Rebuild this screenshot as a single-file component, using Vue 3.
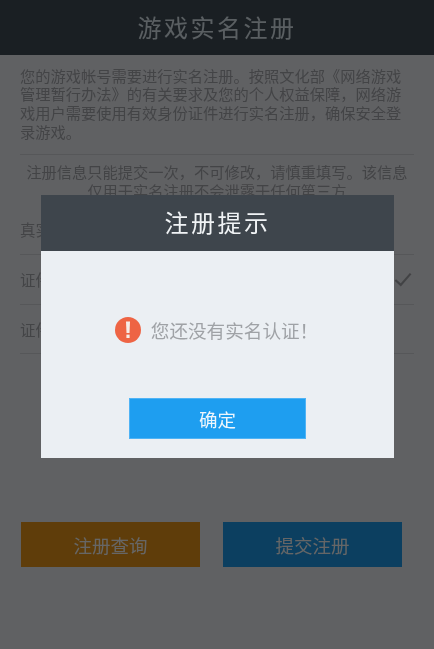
<script setup>
const rows = [
  { label: '真实姓名', check: false, short: false },
  { label: '证件类型', check: true, short: false },
  { label: '证件号码', check: false, short: true }
]
</script>

<template>
  <div class="page">
    <header class="top">游戏实名注册</header>
    <p class="intro">您的游戏帐号需要进行实名注册。按照文化部《网络游戏管理暂行办法》的有关要求及您的个人权益保障，网络游戏用户需要使用有效身份证件进行实名注册，确保安全登录游戏。</p>
    <div class="form">
      <p class="notice">注册信息只能提交一次，不可修改，请慎重填写。该信息仅用于实名注册不会泄露于任何第三方</p>
      <div v-for="row in rows" :key="row.label" class="row" :class="{ short: row.short }">
        <span>{{ row.label }}</span>
        <svg v-if="row.check" class="check" viewBox="0 0 20 16" width="18" height="15">
          <path d="M1.5 8.5 L7.5 14 L18.5 1.5" fill="none" stroke="#a6a8ac" stroke-width="2.4" />
        </svg>
      </div>
    </div>
    <div class="actions">
      <button class="btn query">注册查询</button>
      <button class="btn submit">提交注册</button>
    </div>

    <div class="overlay">
      <div class="modal">
        <div class="modal-title">注册提示</div>
        <div class="modal-msg">
          <svg class="warn" viewBox="0 0 26 26" width="26" height="26">
            <circle cx="13" cy="13" r="13" fill="#ee6444" />
            <path d="M11 4.5 h4 l-.5 11.5 h-3 z" fill="#f6ece8" />
            <rect x="11.4" y="17.6" width="3.2" height="3.4" fill="#f6ece8" />
          </svg>
          <span>您还没有实名认证！</span>
        </div>
        <button class="ok">确定</button>
      </div>
    </div>
  </div>
</template>

<style scoped>
.page {
  position: relative;
  width: 434px;
  height: 649px;
  overflow: hidden;
  background: #f0f2f7;
  color: #a8aab0;
  font-family: "Noto Sans CJK SC", "Noto Sans", sans-serif;
  font-size: 15.25px;
  line-height: 18.7px;
  filter: blur(0.4px);
}
.top {
  height: 55px;
  background: #414e58;
  color: #e2eef5;
  font-size: 24px;
  line-height: 54px;
  letter-spacing: 2.5px;
  text-align: center;
}
.intro {
  height: 100px;
  margin: 0 20px;
  padding-top: 10.5px;
  box-sizing: border-box;
  border-bottom: 1px solid #d8dade;
}
.form {
  padding: 0 20px;
}
.notice {
  margin: 0;
  padding-top: 7px;
  height: 50px;
  box-sizing: border-box;
  text-align: center;
  overflow: hidden;
}
.row {
  display: flex;
  align-items: center;
  justify-content: space-between;
  height: 50px;
  box-sizing: border-box;
  border-bottom: 1px solid #d8dade;
  font-size: 15.5px;
}
.row.short {
  height: 49px;
}
.check {
  margin-right: 2px;
}
.actions {
  display: flex;
  gap: 23px;
  margin: 168px 0 0 21px;
}
.btn {
  width: 179px;
  height: 45px;
  padding: 0;
  border: none;
  color: #fff;
  font-family: inherit;
  font-size: 18.5px;
}
.query {
  background: #ee9919;
}
.submit {
  background: #1e9ef0;
}
.overlay {
  position: absolute;
  inset: 0;
  background: rgba(0, 0, 0, 0.6);
}
.modal {
  position: absolute;
  left: 41px;
  top: 195px;
  width: 353px;
  height: 263px;
  display: flex;
  flex-direction: column;
  align-items: center;
  background: #ebeff3;
}
.modal-title {
  align-self: stretch;
  height: 56px;
  background: #3e454c;
  color: #f0f3f5;
  font-size: 24px;
  line-height: 54px;
  letter-spacing: 2.5px;
  text-align: center;
}
.modal-msg {
  display: flex;
  align-items: center;
  gap: 10px;
  margin-top: 66px;
  height: 26px;
  color: #9fa2a6;
  font-size: 18.6px;
  white-space: nowrap;
  transform: translateX(-1px);
}
.warn {
  flex: none;
}
.ok {
  width: 177px;
  height: 41px;
  margin-top: 55px;
  padding: 0;
  border: 1px solid #4fb3f5;
  box-sizing: border-box;
  background: #1e9ef0;
  color: #eef6fc;
  font-family: inherit;
  font-size: 18.5px;
}
</style>
